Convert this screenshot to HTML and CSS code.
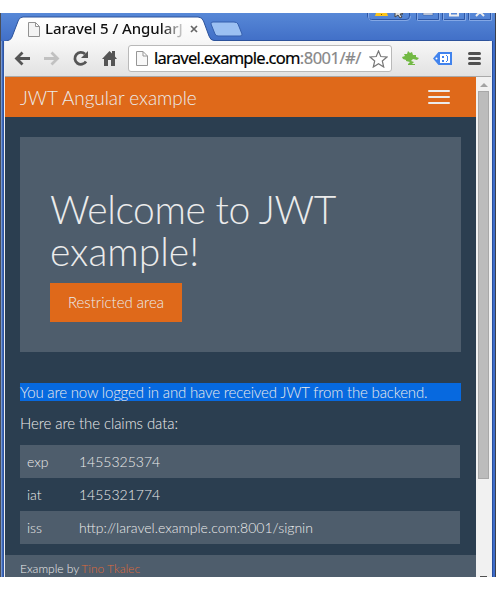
FILE: index.html
```html
<!DOCTYPE html>
<html lang="en">
<head>
<meta charset="utf-8">
<title>Laravel 5 / AngularJS</title>
<link rel="stylesheet" href="styles.css">
</head>
<body>
<div class="window">
  <div class="titlebar">
    <svg class="frame-art" width="496" height="28" viewBox="0 13 496 28">
      <defs><linearGradient id="tab" x1="0" y1="0" x2="0" y2="1"><stop offset="0" stop-color="#fff"/><stop offset="1" stop-color="#f6f6f6"/></linearGradient></defs>
      <path d="M4.500 45V43Q4.500 40.500 8 40.500Q11 40 12 37L18.500 20Q20 17 23 17H198Q202 17 203.500 21L209 36Q210.500 40.500 214 40.500H489Q491.500 40.500 491.500 43V45Z" fill="url(#tab)" stroke="#2d539b"/>
      <path d="M211 24Q210.500 22 213 22H234Q237 22 238 24L242 34Q242.500 36 240 36H218Q216 36 215 34Z" fill="#9bc0f2" stroke="#355fad"/>
      <g fill="none" stroke="#2d56a5"><path d="M367.500 12V16Q367.500 19.500 371.500 19.500H406Q409.500 19.500 409.500 16V12M416.500 12V19.500H438.500V12M442.500 12V19.500H464.500V12M468.500 12V19.500H490.500V12"/></g>
      <g fill="none" stroke="#83a7e5"><path d="M368.500 12V16Q368.500 20.500 372 20.500H406Q410.500 20.500 410.500 16M417.500 13V20.500H439.500V13M443.500 13V20.500H465.500V13M469.500 13V20.500H491.500V13"/></g>
      <path d="M376 13H387L388 16H375Z" fill="#fcc419"/><path d="M381 14h1v1h-1z" fill="#805800"/>
      <path d="M395 12V17L398 15L400 18L402 17L400 14H403L400 12" fill="#ddd" stroke="#444"/>
      <path d="M423 13H433V15H423Z" fill="#eee" stroke="#36599a" stroke-width=".6"/><path d="M450 12V15.500H458V12" fill="none" stroke="#eee" stroke-width="2"/><path d="M476 16L480 12L484 16" fill="none" stroke="#eee" stroke-width="2"/>
    </svg>
    <div class="tab">
      <svg width="12" height="15" viewBox="0 0 12 15"><path d="M.5 .5H7.500L11.500 4.500V14.500H.5ZM7.500 .5V4.500H11.500" fill="#f3f3f3" stroke="#929292"/></svg>
      <span class="tab-title">Laravel 5 / AngularJ</span>
      <svg class="close" width="8" height="8" viewBox="0 0 8 8"><path d="M1 1L7 7M7 1L1 7" stroke="#666" stroke-width="1.700"/></svg>
    </div>
  </div>
  <div class="inner">
    <div class="toolbar">
      <svg class="nav-icons" width="108" height="35" viewBox="10 41 108 35">
        <g fill="none" stroke="#555" stroke-width="2.800"><path d="M30 58.500H17M22.500 52.500L16.500 58.500L22.500 64.500"/><path d="M44 58.500H57M51.500 52.500L57.500 58.500L51.500 64.500" stroke="#c1c1c1"/><path d="M85 54A6 6 0 1 0 86 61.500"/></g>
        <path d="M88 51V58H81Z" fill="#555"/><path d="M102 59L109.500 51L112 53.500V51H115V56.500L117 59H115V66H111V60H108V66H104V59Z" fill="#555"/>
      </svg>
      <div class="address">
        <svg width="12" height="15" viewBox="0 0 12 15"><path d="M.5 .5H7L11.500 5V14.500H.5ZM7 .5V5H11.500" fill="#f8f8f8" stroke="#969696"/></svg>
        <span class="url">laravel.example.com<span class="path">:8001/#/</span></span>
        <svg class="star" width="19" height="18" viewBox="0 0 19 18"><path d="M9.500 1L11.800 6.500L18 7L13.300 11L14.700 17L9.500 13.800L4.300 17L5.700 11L1 7L7.200 6.500Z" fill="#fff" stroke="#777" stroke-width="1.200"/></svg>
      </div>
      <svg class="extensions" width="82" height="35" viewBox="400 41 82 35">
        <path d="M402 57L405 56L404 54L407 54L408 51L410 53L412 52L413 55L416 55V57L419 58L417 60L413 59L411 61L414 62L412 64H415V65H408V64L410 62L406 61V60L403 59Z" fill="#72b944"/>
        <path d="M433 58.500L438.500 52H452V65H438.500Z" fill="#4183ed"/><circle cx="436.500" cy="58.500" r="1" fill="#fff"/><path d="M440 54H450V63H440Z" fill="#fff"/><path d="M442 56h2v2h-2zM442 60h2v2h-2zM446 55h1v1h1v5h-1v1h-1v-1h1v-5h-1z" fill="#4183ed"/>
        <path d="M469.500 53.500H479.500M469.500 58.500H479.500M469.500 63.500H479.500" stroke="#505050" stroke-width="3" stroke-linecap="round"/>
      </svg>
    </div>
    <div class="viewport">
      <main class="page">
        <nav class="navbar"><span>JWT Angular example</span><div class="burger"><i></i><i></i><i></i></div></nav>
        <section class="jumbotron"><h1>Welcome to JWT example!</h1><a class="button">Restricted area</a></section>
        <p class="selected">You are now logged in and have received JWT from the backend.</p>
        <p class="claims">Here are the claims data:</p>
        <table><tr><td>exp</td><td>1455325374</td></tr><tr><td>iat</td><td>1455321774</td></tr><tr><td>iss</td><td>http://laravel.example.com:8001/signin</td></tr></table>
        <footer>Example by <a>Tino Tkalec</a></footer>
      </main>
      <div class="scrollbar"><div class="up"></div><div class="thumb"></div><div class="down"></div></div>
    </div>
  </div>
</div>
</body>
</html>
```
FILE: styles.css
```css
* { box-sizing: border-box; }
body { margin: 0; padding: 13px 0; background: #fff; font-family: Lato, sans-serif; font-weight: 300; }
.window { height: 564px; overflow: hidden; background: linear-gradient(90deg, #4a4e57 0 1px, #7797d0 1px 2px, #3d68ba 2px 3px, #2e55a5 3px 4px, #eee 4px 5px, transparent 5px 491px, #edf0f4 491px 492px, #294f9d 492px 493px, #3d6cc9 493px 495px, #3a3f4a 495px 496px); }
.titlebar { height: 28px; background: linear-gradient(#5788d7, #416fc7); position: relative; border-left: 1px solid #4a4e57; border-right: 1px solid #3a3f4a; }
.frame-art { position: absolute; left: -1px; top: 0; }
.tab { position: relative; display: flex; align-items: center; height: 28px; padding: 4px 0 0 27px; }
.tab-title { margin-left: 5px; width: 137px; font: 500 15px "Noto Sans", sans-serif; letter-spacing: -.07px; line-height: 20px; margin-top: -2px; white-space: nowrap; color: transparent; background: linear-gradient(90deg, #111 116px, #ccc 137px); background-clip: text; }
.close { margin-left: 8px; }
.inner { margin-left: 5px; width: 486px; }
.toolbar { height: 36px; display: flex; background: linear-gradient(#f7f7f7, #e2e2e2); border-bottom: 1px solid #a9a9a9; }
.nav-icons { margin-left: 5px; flex: none; }
.address { margin: 4px 0 0 10px; width: 264px; height: 27px; flex: none; border: 1px solid #b9b9b9; border-radius: 3px; background: #fff; display: flex; align-items: center; padding-left: 7px; }
.url { font: 16.5px "Noto Sans", sans-serif; letter-spacing: -.72px; margin: -2px 0 0 6px; color: #000; -webkit-text-stroke: .2px; white-space: nowrap; width: 211px; }
.path { color: #888; letter-spacing: -.5px; }
.star { margin-left: 4px; flex: none; }
.extensions { margin-left: 8px; flex: none; }
.viewport { display: flex; height: 500px; }
.page { width: 471px; background: #2b3e50; color: #ebebeb; font-size: 15px; overflow: hidden; }
.navbar { height: 40px; background: #df691a; padding: 0 26px 0 15px; display: flex; align-items: center; justify-content: space-between; font-size: 19px; line-height: 40px; letter-spacing: -.06px; }
.navbar span { padding-top: 2px; }
.burger { display: grid; gap: 4px; width: 22px; }
.burger i { height: 2px; background: #ebebeb; border-radius: 1px; }
.jumbotron { margin: 20px 15px 31px; height: 215px; background: #4e5d6c; padding: 51px 30px 0; }
h1 { margin: 0 0 11px; font-size: 39px; line-height: 42px; font-weight: 300; }
h1::first-line { letter-spacing: -.4px; }
.button { display: block; width: 132px; height: 39px; line-height: 39px; background: #df691a; text-align: center; }
.selected { margin: 0 15px; height: 18px; line-height: 18px; background: #0769df; white-space: nowrap; letter-spacing: -.165px; }
.claims { margin: 12px 15px 11px; line-height: 21px; letter-spacing: -.08px; }
table { width: 440px; margin-left: 15px; border-collapse: collapse; table-layout: fixed; font-size: 14px; }
tr { height: 33px; }
tr:nth-child(odd) { background: #4e5d6c; }
td { padding: 0 7px; }
td:first-child { width: 52px; }
footer { margin-top: 11px; height: 22px; background: #4e5d6c; padding: 5px 15px; font-size: 12px; line-height: 18px; }
footer a { color: #df6939; margin-left: -1px; }
.scrollbar { width: 15px; background: #f1f1f1; display: flex; flex-direction: column; padding: 6px 2px 0; }
.up { width: 8px; height: 4px; margin: 0 0 4px 2px; background: #a3a3a3; clip-path: polygon(50% 0, 100% 100%, 0 100%); }
.thumb { width: 11px; height: 388px; background: #bcbcbc; border: 1px solid #a8a8a8; }
.down { margin: auto 0 0 2px; width: 7px; height: 1px; background: #505050; }
```
